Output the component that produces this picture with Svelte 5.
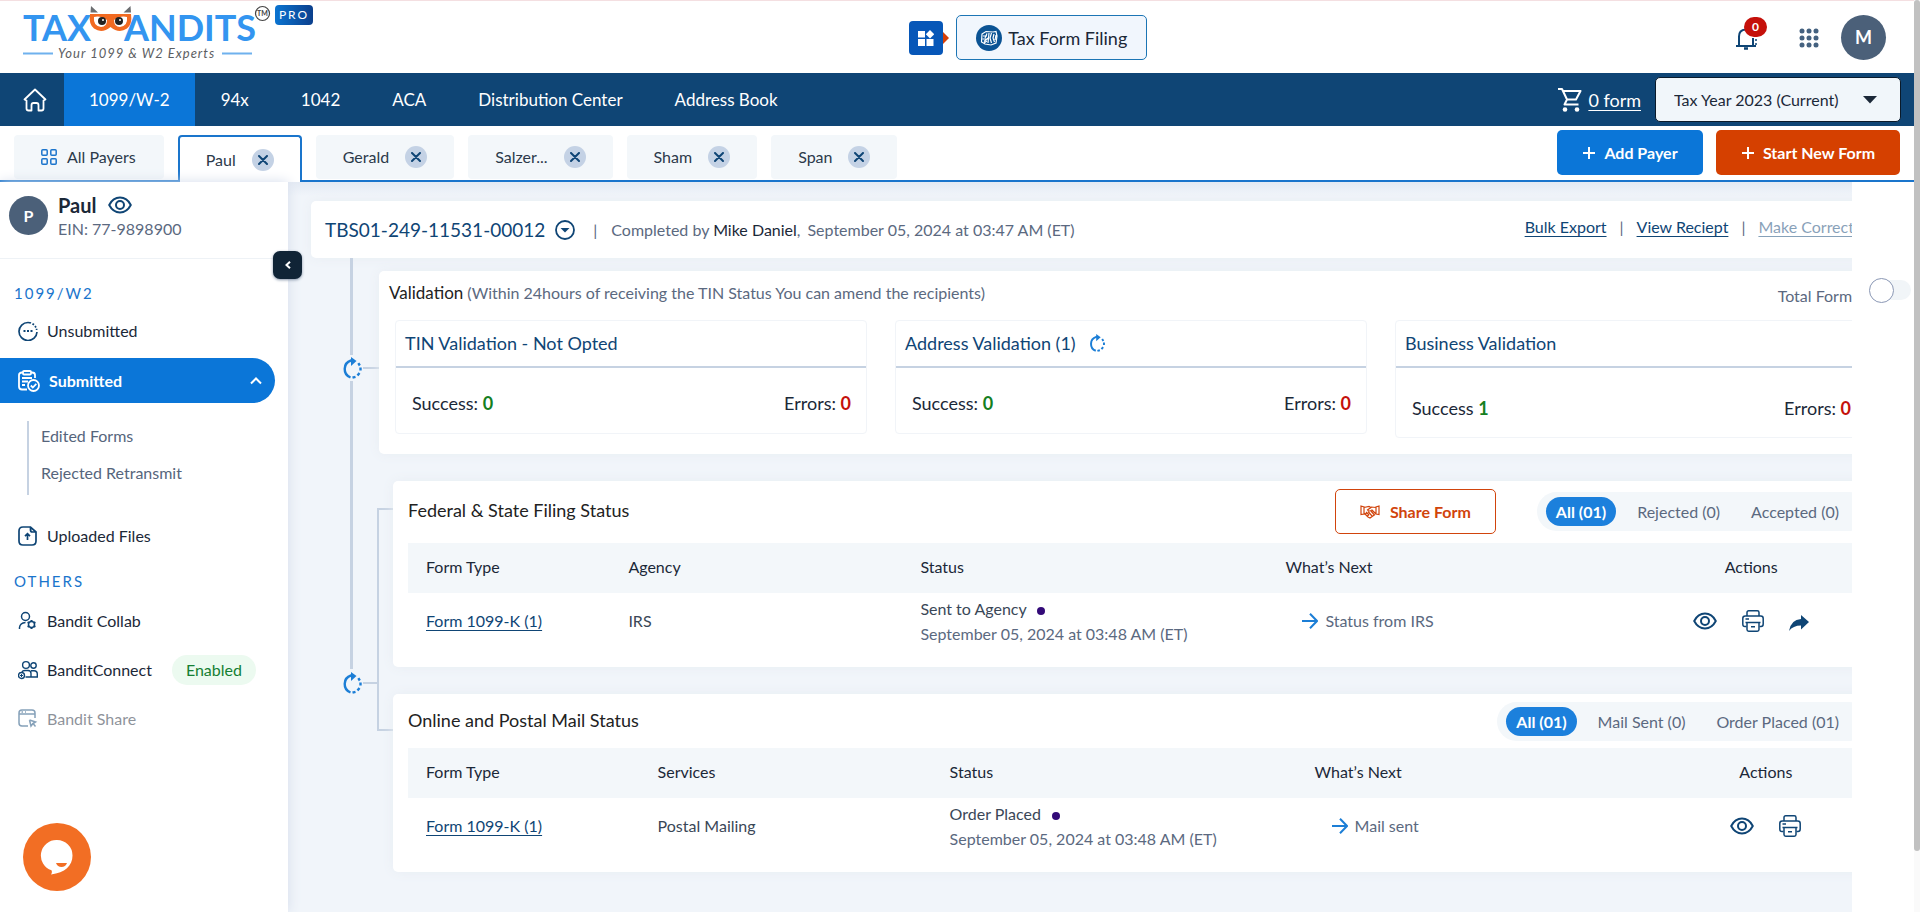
<script lang="ts">
    type Payer = { name: string; active?: boolean };
    type Check = { title: string; label: string; success: number; errors: number; pending?: boolean; tall?: boolean };

    const menu: string[] = ['1099/W-2', '94x', '1042', 'ACA', 'Distribution Center', 'Address Book'];

    let payers: Payer[] = $state([
        { name: 'Paul', active: true },
        { name: 'Gerald' },
        { name: 'Salzer...' },
        { name: 'Sham' },
        { name: 'Span' }
    ]);

    const checks: Check[] = [
        { title: 'TIN Validation - Not Opted', label: 'Success:', success: 0, errors: 0 },
        { title: 'Address Validation (1)', label: 'Success:', success: 0, errors: 0, pending: true },
        { title: 'Business Validation', label: 'Success', success: 1, errors: 0, tall: true }
    ];

    const federalFilters: string[] = ['All (01)', 'Rejected (0)', 'Accepted (0)'];
    const mailFilters: string[] = ['All (01)', 'Mail Sent (0)', 'Order Placed (01)'];

    let submittedOpen = $state(true);

    function closePayer(name: string) {
        payers = payers.filter((payer) => payer.name !== name);
    }
</script>

{#snippet eye()}
    <svg width="24" height="18" viewBox="0 0 24 18" fill="none" stroke="currentColor" stroke-width="2">
        <path d="M1.2 9C3.6 4.4 7.5 1.6 12 1.6S20.400 4.400 22.800 9C20.400 13.600 16.500 16.400 12 16.400S3.600 13.600 1.200 9Z" stroke-linejoin="round" />
        <circle cx="12" cy="9" r="4" />
    </svg>
{/snippet}

{#snippet printer()}
    <svg width="22" height="22" viewBox="0 0 22 22" fill="none" stroke="currentColor" stroke-width="1.500" stroke-linejoin="round">
        <path d="M5 6V2.500Q5 .8 6.700 .8H15.300Q17 .8 17 2.500V6" />
        <path d="M4.500 16.500H3Q.8 16.500 .8 14V8.500Q.8 6 3.200 6H18.800Q21.200 6 21.200 8.500V14Q21.200 16.500 19 16.500H17.500" />
        <path d="M3.500 12.500H18.500M5 12.500V19.500Q5 21.200 6.700 21.200H15.300Q17 21.200 17 19.500V12.500M9 16.800H13M3.500 9H7" />
    </svg>
{/snippet}

{#snippet progress(size: number)}
    <svg width={size} height={size} viewBox="0 0 22 22" fill="none" stroke="#1c7ed6" stroke-width="2.400">
        <path d="M9.500 20.500A9 9 0 0 1 10 3.500H12" />
        <path d="M10 0L15.500 4L10 9Z" fill="#1c7ed6" stroke="none" />
        <path d="M11.500 20.600L14.500 19.800M16.500 18.400L18.500 16M19.500 13.500V10.500M18.800 8.500L17.300 6.200" />
    </svg>
{/snippet}

{#snippet arrow()}
    <svg width="16" height="16" viewBox="0 0 16 16" fill="none" stroke="#1c7ed6" stroke-width="2">
        <path d="M0 8H15M8 .8L15 8L8 15.200" />
    </svg>
{/snippet}

{#snippet plus()}
    <svg width="14" height="14" viewBox="0 0 14 14" stroke="currentColor" stroke-width="2"><path d="M7 1V13M1 7H13" /></svg>
{/snippet}

{#snippet filters(items: string[])}
    <div class="filters">
        {#each items as item, i}
            <button type="button" class:selected={i === 0}>{item}</button>
        {/each}
    </div>
{/snippet}

<div class="window">
    <div class="page">
        <header class="topbar">
            <a class="logo" href="/" aria-label="TaxBandits home">
                <svg width="275" height="60" viewBox="0 0 275 60">
                    <g class="logo-word">
                        <text x="23" y="41">TAX</text>
                        <text x="124" y="41">ANDITS</text>
                    </g>
                    <path d="M91 6L98 12.500H90.500ZM130.500 6L123.500 12.500H131Z" fill="#6b6d70" />
                    <path d="M90 14H131Q132.500 24 127 28.500Q119 34 110.500 27Q102 34 94 28.500Q88.500 24 90 14Z" fill="#f26a21" />
                    <path d="M94 17Q100 15 107 20Q107 27 101 27Q93 26 94 17ZM127 17Q121 15 114 20Q114 27 120 27Q128 26 127 17Z" fill="#fff" />
                    <circle cx="102" cy="21" r="4" fill="#222" />
                    <circle cx="119" cy="21" r="4" fill="#222" />
                    <circle cx="103" cy="20" r="1" fill="#fff" />
                    <circle cx="120" cy="20" r="1" fill="#fff" />
                    <circle cx="262.500" cy="13.500" r="7" fill="none" stroke="#444" stroke-width="1.200" />
                    <text class="logo-tm" x="262.500" y="16">TM</text>
                    <path d="M23 53.500H53M222 53.500H252" stroke="#6fb1ee" stroke-width="2" />
                    <text class="logo-tag" x="58" y="58">Your 1099 &amp; W2 Experts</text>
                </svg>
                <span class="pro">PRO</span>
            </a>

            <div class="product">
                <button type="button" class="launcher" aria-label="Products">
                    <svg width="16" height="16" viewBox="0 0 16 16" fill="#fff">
                        <path d="M0 1H7V7.500H0ZM0 9H7V16H0ZM8.500 9H15.500V16H8.500ZM12 0L16.200 4.200L12 8.400L7.800 4.200Z" />
                    </svg>
                </button>
                <span class="pointer"></span>
                <a class="product-name" href="/filing">
                    <svg width="26" height="26" viewBox="0 0 26 26" fill="none" stroke="#fff" stroke-width="1.200">
                        <circle cx="13" cy="13" r="13" fill="#0b5394" stroke="none" />
                        <path d="M6 9L10 6.500L17 7L20 6.500L21 11L20 18L15 20L9 19L5.500 17ZM7 11H11M6.500 14H10M8 16.500L12 13M11 8.500L9 13M13 8L12 18M15.500 8L14 13L15.500 18M18 9L17 13L18.500 17M20 10L19 15M8 18L11 16" />
                    </svg>
                    Tax Form Filing
                </a>
            </div>

            <div class="account">
                <button type="button" class="bell" aria-label="Notifications">
                    <svg width="24" height="24" viewBox="0 0 24 24" fill="none" stroke="#0f4575" stroke-width="2">
                        <path d="M1 20H21M4 20V10.500Q4 4 10.500 3.500M18 12V20" />
                        <path d="M9 22.500H13" stroke-width="2.500" />
                        <path d="M21 13V15M21 17V19" stroke-width="1.500" />
                    </svg>
                    <span class="badge">0</span>
                </button>
                <button type="button" class="apps" aria-label="Apps">
                    <svg width="20" height="20" viewBox="0 0 20 20" fill="#44617f">
                        {#each [3, 10, 17] as cy}
                            {#each [3, 10, 17] as cx}
                                <circle {cx} {cy} r="2.500" />
                            {/each}
                        {/each}
                    </svg>
                </button>
                <span class="avatar large">M</span>
            </div>
        </header>

        <nav class="menu">
            <a class="home" href="/" aria-label="Home">
                <svg width="24" height="24" viewBox="0 0 24 24" fill="none" stroke="#fff" stroke-width="1.800" stroke-linejoin="round" stroke-linecap="round">
                    <path d="M1.500 11.500L12 1.500L22.500 11.500L20.500 12.500V20.500Q20.500 22.500 18.500 22.500H15.500V17Q15.500 15 13.500 15H10.500Q8.500 15 8.500 17V22.500H5.500Q3.500 22.500 3.500 20.500V12.500Z" />
                </svg>
            </a>
            {#each menu as item, i}
                <a class="menu-item" class:current={i === 0} href="/">{item}</a>
            {/each}
            <a class="cart" href="/cart">
                <svg width="24" height="25" viewBox="0 0 24 25" fill="none" stroke="#fff" stroke-width="2">
                    <path d="M0 2H4L9 12.500H18L22.500 4H5M9 12.500L6.500 17.500H20.500" stroke-linejoin="round" />
                    <circle cx="7" cy="22.500" r="2.300" fill="#fff" stroke="none" />
                    <circle cx="19" cy="22.500" r="2.300" fill="#fff" stroke="none" />
                </svg>
                <span>0 form</span>
            </a>
            <div class="year">
                <select aria-label="Tax year">
                    <option>Tax Year 2023 (Current)</option>
                    <option>Tax Year 2022</option>
                </select>
                <svg width="14" height="8" viewBox="0 0 14 8" fill="#1b2838"><path d="M0 0H14L7 7.500Z" /></svg>
            </div>
        </nav>

        <div class="payers">
            <a class="payer all" href="/payers">
                <svg width="16" height="16" viewBox="0 0 16 16" fill="none" stroke="#1c75cc" stroke-width="1.500">
                    <rect x=".8" y=".8" width="5.400" height="5.400" rx="1" />
                    <rect x="9.800" y=".8" width="5.400" height="5.400" rx="1" />
                    <rect x=".8" y="9.800" width="5.400" height="5.400" rx="1" />
                    <rect x="9.800" y="9.800" width="5.400" height="5.400" rx="1" />
                </svg>
                All Payers
            </a>
            {#each payers as payer (payer.name)}
                <div class="payer" class:open={payer.active}>
                    <a href="/payers">{payer.name}</a>
                    <button type="button" class="close" aria-label={`Close ${payer.name}`} onclick={() => closePayer(payer.name)}>
                        <svg width="10" height="10" viewBox="0 0 10 10" stroke="#0f4575" stroke-width="2" stroke-linecap="round">
                            <path d="M1 1L9 9M9 1L1 9" />
                        </svg>
                    </button>
                </div>
            {/each}
            <div class="payer-actions">
                <button type="button" class="action blue">{@render plus()} Add Payer</button>
                <button type="button" class="action orange">{@render plus()} Start New Form</button>
            </div>
        </div>

        <div class="body">
            <aside class="sidebar">
                <div class="profile">
                    <span class="avatar">P</span>
                    <div>
                        <div class="profile-name">Paul <a href="/payer" aria-label="View payer">{@render eye()}</a></div>
                        <div class="ein">EIN: 77-9898900</div>
                    </div>
                    <button type="button" class="collapse" aria-label="Collapse menu">
                        <svg width="6" height="8" viewBox="0 0 6 8" fill="none" stroke="#fff" stroke-width="2"><path d="M5 .8L1.500 4L5 7.200" /></svg>
                    </button>
                </div>

                <h2>1099/W2</h2>
                <a class="side-item" href="/unsubmitted">
                    <svg width="20" height="20" viewBox="0 0 20 20" fill="none" stroke="#0f4575" stroke-width="1.700">
                        <path d="M19 11A9 9 0 1 1 10 1.500Q12 1.500 13 2" />
                        <path d="M14.500 2.700L16 3.800M17 5L18 6.500M18.600 7.800V9" />
                        <path d="M5.500 10H7.500M9 10H11M12.500 10H14.500" stroke-width="2" />
                    </svg>
                    Unsubmitted
                </a>
                <button type="button" class="side-item chosen" aria-expanded={submittedOpen} onclick={() => (submittedOpen = !submittedOpen)}>
                    <svg width="22" height="22" viewBox="0 0 22 22" fill="none" stroke="#fff" stroke-width="1.800">
                        <path d="M9 19.500H4Q1 19.500 1 16.500V5Q1 2.500 4 2.500H5M13 2.500H14Q17 2.500 17 5V8" />
                        <rect x="5" y="1" width="8" height="3.500" rx="1" />
                        <path d="M4 8H14M4 11.500H10M4 15H7" />
                        <circle cx="15.500" cy="15.500" r="5.500" />
                        <path d="M12.800 15.500L14.800 17.500L18.300 13.800" />
                    </svg>
                    Submitted
                    <svg class="chevron" width="12" height="8" viewBox="0 0 12 8" fill="none" stroke="#fff" stroke-width="2"><path d="M1 6.500L6 1.500L11 6.500" /></svg>
                </button>
                {#if submittedOpen}
                    <div class="submenu">
                        <a href="/edited">Edited Forms</a>
                        <a href="/rejected">Rejected Retransmit</a>
                    </div>
                {/if}
                <a class="side-item" href="/uploads">
                    <svg width="20" height="20" viewBox="0 0 20 20" fill="none" stroke="#0f4575" stroke-width="1.700">
                        <path d="M12.500 1H5Q1 1 1 5V15Q1 19 5 19H14Q18 19 18 15V6ZM12.500 1V4Q12.500 6 14.500 6H18M9.500 14V8M7 10.200L9.500 7.700L12 10.200" />
                    </svg>
                    Uploaded Files
                </a>

                <h2>OTHERS</h2>
                <a class="side-item" href="/collab">
                    <svg width="20" height="20" viewBox="0 0 20 20" fill="none" stroke="#0f4575" stroke-width="1.500">
                        <circle cx="7.500" cy="5.500" r="4" />
                        <path d="M1.500 18V16.500Q2 12 7.500 11.500" />
                        <circle cx="13.500" cy="13.500" r="3" />
                        <path d="M13.500 9V10.500M13.500 16.500V18M9.600 11.200L11 12M16 15L17.400 15.800M17.400 11.200L16 12M11 15L9.600 15.800" stroke-width="2" />
                    </svg>
                    Bandit Collab
                </a>
                <a class="side-item" href="/connect">
                    <svg width="20" height="20" viewBox="0 0 20 20" fill="none" stroke="#0f4575" stroke-width="1.400">
                        <circle cx="8" cy="5" r="3.400" />
                        <circle cx="15.500" cy="5.500" r="2.700" />
                        <path d="M4 12Q4.500 10.500 7 10.500H10Q13 10.500 13 13.500V17H7.500M13 10.800H16Q19.300 10.800 19.300 14V17H13" />
                        <circle cx="3.500" cy="15.500" r="3" />
                        <path d="M3.500 14V17M2 15.500H5" stroke-width="1" />
                    </svg>
                    BanditConnect
                    <span class="enabled">Enabled</span>
                </a>
                <a class="side-item faded" href="/share">
                    <svg width="20" height="20" viewBox="0 0 20 20" fill="none" stroke="#0f4575" stroke-width="1.500">
                        <path d="M10 17H4Q1 17 1 14V4Q1 1 4 1H14Q17 1 17 4V9M1 5H17M3.500 3H5M7 3H8M11.500 11L17.500 13L15 14.500L17.500 17.500M11.500 11L13 17L15 14.500" />
                    </svg>
                    Bandit Share
                </a>

                <button type="button" class="chat" aria-label="Chat">
                    <svg width="34" height="36" viewBox="0 0 34 36">
                        <path d="M17 1A15.500 15.500 0 0 1 32.500 16.500C32.500 27 25 33.500 11 35.500Q12.500 33.500 11.500 31.200A15.500 15.500 0 0 1 17 1Z" fill="#fff" />
                        <path d="M16 24H27Q25.500 28 21.500 28T16 24Z" fill="#f26e24" />
                    </svg>
                </button>
            </aside>

            <main>
                <div class="canvas">
                    <section class="card submission">
                        <h1>TBS01-249-11531-00012</h1>
                        <button type="button" class="toggle-details" aria-label="Submission details">
                            <svg width="20" height="20" viewBox="0 0 20 20" fill="none" stroke="#0f4575" stroke-width="1.800">
                                <circle cx="10" cy="10" r="9" />
                                <path d="M5.500 8H14.500L10 12.500Z" fill="#0f4575" stroke="none" />
                            </svg>
                        </button>
                        <span class="bar">|</span>
                        <span>Completed by <b>Mike Daniel</b>,</span>
                        <time datetime="2024-09-05T03:47">September 05, 2024 at 03:47 AM (ET)</time>
                        <div class="links">
                            <a href="/export">Bulk Export</a>
                            <span class="bar">|</span>
                            <a href="/receipt">View Reciept</a>
                            <span class="bar">|</span>
                            <a class="disabled" href="/correct">Make Corrections</a>
                        </div>
                    </section>

                    <div class="stage">
                        <div class="rail">
                            <span class="line"></span>
                            <span class="node">{@render progress(22)}</span>
                            <span class="joint"></span>
                            <span class="line"></span>
                        </div>
                        <section class="card validation">
                            <header>
                                <p><strong>Validation</strong> (Within 24hours of receiving the TIN Status You can amend the recipients)</p>
                                <span>Total Forms</span>
                            </header>
                            <div class="checks">
                                {#each checks as check}
                                    <article class="check" class:tall={check.tall}>
                                        <h3>
                                            {check.title}
                                            {#if check.pending}{@render progress(18)}{/if}
                                        </h3>
                                        <div class="counts">
                                            <span>{check.label} <b class="good">{check.success}</b></span>
                                            <span>Errors: <b class="bad">{check.errors}</b></span>
                                        </div>
                                    </article>
                                {/each}
                            </div>
                        </section>
                    </div>

                    <div class="stage statuses">
                        <div class="rail">
                            <span class="line"></span>
                            <span class="node">{@render progress(22)}</span>
                            <span class="joint"></span>
                        </div>
                        <div class="bracket"></div>
                        <div class="status-list">
                            <section class="card status">
                                <header class="tall-head">
                                    <h3>Federal &amp; State Filing Status</h3>
                                    <button type="button" class="share">
                                        <svg width="20" height="14" viewBox="0 0 20 14" fill="none" stroke="#d1440c" stroke-width="1.200">
                                            <path d="M1 1L4 2V9L1 9.500ZM19 1L16 2V9L19 9.500ZM4 2.500L9 1.500L11 2.500L7.500 5Q9 7 12 5L16 9M11 2L16 2.500M4 8L8 12L10 13L15 9.500M6 7L9 10M8 6.500L12 11M11 6L14 9.500M5.500 9L7 7.500M7.500 11L9 9.500" />
                                        </svg>
                                        Share Form
                                    </button>
                                    {@render filters(federalFilters)}
                                </header>
                                <table>
                                    <colgroup>
                                        <col class="w14" /><col class="w20" /><col class="w25" /><col class="w25" /><col />
                                    </colgroup>
                                    <thead>
                                        <tr><th>Form Type</th><th>Agency</th><th>Status</th><th>What’s Next</th><th class="actions">Actions</th></tr>
                                    </thead>
                                    <tbody>
                                        <tr>
                                            <td><a href="/form">Form 1099-K (1)</a></td>
                                            <td>IRS</td>
                                            <td>Sent to Agency <i class="dot"></i><br /><time datetime="2024-09-05T03:48">September 05, 2024 at 03:48 AM (ET)</time></td>
                                            <td><span class="next">{@render arrow()} Status from IRS</span></td>
                                            <td>
                                                <div class="tools">
                                                    <button type="button" aria-label="View">{@render eye()}</button>
                                                    <button type="button" aria-label="Print">{@render printer()}</button>
                                                    <button type="button" aria-label="Share">
                                                        <svg width="20" height="22" viewBox="0 0 20 22" fill="currentColor"><path d="M12 5L20 12L12 19.500V15.500Q4 15.500 0 21Q2 9.500 12 9Z" /></svg>
                                                    </button>
                                                </div>
                                            </td>
                                        </tr>
                                    </tbody>
                                </table>
                            </section>

                            <section class="card status">
                                <header>
                                    <h3>Online and Postal Mail Status</h3>
                                    {@render filters(mailFilters)}
                                </header>
                                <table>
                                    <colgroup>
                                        <col class="w16" /><col class="w20" /><col class="w25" /><col class="w25" /><col />
                                    </colgroup>
                                    <thead>
                                        <tr><th>Form Type</th><th>Services</th><th>Status</th><th>What’s Next</th><th class="actions">Actions</th></tr>
                                    </thead>
                                    <tbody>
                                        <tr>
                                            <td><a href="/form">Form 1099-K (1)</a></td>
                                            <td>Postal Mailing</td>
                                            <td>Order Placed <i class="dot"></i><br /><time datetime="2024-09-05T03:48">September 05, 2024 at 03:48 AM (ET)</time></td>
                                            <td><span class="next">{@render arrow()} Mail sent</span></td>
                                            <td>
                                                <div class="tools">
                                                    <button type="button" aria-label="View">{@render eye()}</button>
                                                    <button type="button" aria-label="Print">{@render printer()}</button>
                                                </div>
                                            </td>
                                        </tr>
                                    </tbody>
                                </table>
                            </section>
                        </div>
                    </div>
                </div>
            </main>

            <aside class="panel">
                <input type="checkbox" class="switch" aria-label="Show panel" />
            </aside>
        </div>
    </div>
    <div class="scrollbar"><div class="thumb"></div></div>
</div>

<style>
    :global(body) {
        background: #fff;
        color: #1b2838;
        font-family: Lato, 'Open Sans', sans-serif;
        font-size: 16px;
        line-height: 24px;
    }

    :global(*) {
        box-sizing: border-box;
    }

    a {
        color: inherit;
        text-decoration: none;
    }

    button,
    select {
        padding: 0;
        border: 0;
        background: none;
        color: inherit;
        font: inherit;
        cursor: pointer;
    }

    svg {
        display: block;
        flex: none;
    }

    h1,
    h2,
    h3,
    p {
        margin: 0;
        font-weight: 400;
    }

    .window {
        display: flex;
        min-height: 100vh;
    }

    .page {
        display: flex;
        flex-direction: column;
        flex: 1;
        min-width: 0;
        border-top: 1px solid #f4dfe1;
    }

    .scrollbar {
        width: 6px;
        background: #fafafa;
    }

    .thumb {
        height: 851px;
        max-height: 94%;
        border-radius: 3px;
        background: #c1c1c1;
    }

    /* top bar */
    .topbar {
        display: grid;
        grid-template-columns: 16fr auto 13fr;
        height: 72px;
        padding-right: 28px;
    }

    .logo {
        display: flex;
        align-items: flex-start;
        margin-top: -1px;
    }

    .logo-word {
        fill: #3395f0;
        font-size: 36px;
        font-weight: 700;
    }

    .logo-tm {
        fill: #444;
        font-size: 7px;
        font-weight: 700;
        text-anchor: middle;
    }

    .logo-tag {
        fill: #5c5e62;
        font-size: 13px;
        font-style: italic;
        letter-spacing: 1px;
    }

    .pro {
        width: 38px;
        margin-top: 5px;
        border-radius: 4px;
        background: linear-gradient(90deg, #0b74d1, #0b3f8c);
        color: #fff;
        font-size: 12px;
        line-height: 20px;
        letter-spacing: 2px;
        text-align: center;
    }

    .product {
        display: flex;
        align-items: center;
        margin-bottom: 13px;
        padding-top: 14px;
    }

    .product-name {
        display: flex;
        align-items: center;
        gap: 6px;
        height: 45px;
        margin-left: 7px;
        padding: 0 19px;
        border: 1px solid #1c75b5;
        border-radius: 5px;
        background: #f1f6fd;
        font-size: 18px;
    }

    .launcher {
        display: grid;
        place-items: center;
        width: 34px;
        height: 34px;
        border-radius: 4px;
        background: #0757b8;
    }

    .pointer {
        border: 6px solid transparent;
        border-right: 0;
        border-left-color: #d63f06;
    }

    .account {
        display: flex;
        align-items: center;
        justify-content: flex-end;
        padding-top: 14px;
        margin-bottom: 13px;
    }

    .bell {
        position: relative;
        margin-right: 40px;
    }

    .badge {
        position: absolute;
        top: -9px;
        left: 9px;
        width: 23px;
        border-radius: 10px;
        background: #c5110b;
        color: #fff;
        font-size: 12px;
        font-weight: 700;
        line-height: 20px;
    }

    .apps {
        margin-right: 22px;
    }

    .avatar {
        flex: none;
        align-self: flex-start;
        width: 39px;
        border-radius: 50%;
        background: #4b6079;
        color: #fff;
        font-weight: 700;
        line-height: 39px;
        text-align: center;
    }

    .avatar.large {
        width: 45px;
        font-size: 18px;
        line-height: 45px;
    }

    /* main menu */
    .menu {
        display: flex;
        align-items: center;
        height: 53px;
        padding-right: 13px;
        background: #0f4575;
        color: #fff;
        font-size: 17px;
    }

    .home {
        display: grid;
        place-items: center;
        width: 64px;
        padding-left: 6px;
    }

    .menu-item {
        padding: 0 26px;
        line-height: 53px;
    }

    .menu-item.current {
        padding: 0 25px;
        background: #0b76d8;
    }

    .cart {
        display: flex;
        align-items: center;
        gap: 6px;
        margin-left: auto;
        margin-right: 14px;
        font-size: 18px;
    }

    .cart span {
        text-decoration: underline;
        text-underline-offset: 3px;
    }

    .year {
        display: grid;
        align-items: center;
        width: 246px;
    }

    .year > * {
        grid-area: 1 / 1;
    }

    .year select {
        width: 100%;
        height: 45px;
        padding: 0 18px;
        border: 1px solid #0a1a2a;
        border-radius: 5px;
        background: #f1f6fa;
        color: #1b2838;
        font-size: 16px;
        appearance: none;
    }

    .year svg {
        justify-self: end;
        margin-right: 24px;
        pointer-events: none;
    }

    /* payer tabs */
    .payers {
        display: flex;
        align-items: flex-end;
        gap: 14px;
        height: 56px;
        padding: 0 14px;
        border-bottom: 2px solid #1a75cc;
    }

    .payer {
        display: flex;
        align-items: center;
        gap: 16px;
        height: 44px;
        margin-bottom: 1px;
        padding: 0 27px;
        border-radius: 4px;
        background: #f3f7fa;
        color: #2c3a4a;
    }

    .payer.all {
        gap: 10px;
        padding-right: 28px;
    }

    .payer.open {
        height: 47px;
        margin-bottom: -2px;
        padding: 0 26px;
        border: 2px solid #1a75cc;
        border-bottom: 0;
        border-radius: 4px 4px 0 0;
        background: #fff;
    }

    .close {
        display: grid;
        place-items: center;
        width: 22px;
        height: 22px;
        border-radius: 50%;
        background: #c4d2e5;
    }

    .payer-actions {
        display: flex;
        gap: 13px;
        margin-left: auto;
        margin-bottom: 5px;
    }

    .action {
        display: flex;
        align-items: center;
        justify-content: center;
        gap: 8px;
        height: 45px;
        border-radius: 5px;
        color: #fff;
        font-weight: 700;
    }

    .blue {
        width: 146px;
        background: #0b76d8;
    }

    .orange {
        width: 184px;
        background: #d54000;
    }

    /* sidebar */
    .body {
        display: flex;
        flex: 1;
    }

    .sidebar {
        display: flex;
        flex-direction: column;
        width: 288px;
        flex: none;
        box-shadow: 0 0 12px #d4dceb;
        z-index: 1;
    }

    .profile {
        display: flex;
        position: relative;
        gap: 10px;
        height: 77px;
        padding: 14px 9px 0;
        border-bottom: 1px solid #eef2f6;
    }

    .profile > div {
        margin-top: -3px;
    }

    .profile-name {
        display: flex;
        align-items: center;
        gap: 12px;
        font-size: 20px;
        font-weight: 700;
    }

    .profile-name a {
        color: #0f4575;
    }

    .ein {
        color: #5b6980;
    }

    .collapse {
        display: grid;
        place-items: center;
        position: absolute;
        right: -14px;
        bottom: -21px;
        width: 29px;
        height: 28px;
        border-radius: 7px;
        background: #102436;
        box-shadow: 0 1px 3px #8594a8;
    }

    .sidebar h2 {
        padding-left: 14px;
        color: #1a75cc;
        font-size: 15px;
        line-height: 24px;
        letter-spacing: 2px;
    }

    .profile + h2 {
        margin-top: 22px;
    }

    .side-item {
        display: flex;
        align-items: center;
        gap: 9px;
        height: 45px;
        margin-bottom: 4px;
        padding-left: 18px;
    }

    .profile + h2 + .side-item {
        margin: 3px 0 5px;
    }

    .chosen {
        width: 275px;
        margin-bottom: 18px;
        border-radius: 0 23px 23px 0;
        background: #0b76d8;
        color: #fff;
        font-weight: 700;
    }

    .chevron {
        margin: 0 13px 0 auto;
    }

    .submenu {
        display: flex;
        flex-direction: column;
        gap: 13px;
        height: 74px;
        margin: 0 0 18px 27px;
        padding: 3px 0 0 12px;
        border-left: 2px solid #c6d2e2;
        color: #56657c;
    }

    .submenu + .side-item {
        margin-bottom: 11px;
    }

    .sidebar h2:not(.profile + h2) {
        margin-bottom: 5px;
    }

    .enabled {
        margin-left: 11px;
        padding: 0 14px;
        border-radius: 15px;
        background: #ecfaf0;
        color: #157f33;
        line-height: 30px;
    }

    .faded {
        opacity: 0.5;
    }

    .chat {
        display: grid;
        place-items: center;
        width: 68px;
        height: 68px;
        margin: auto 0 21px 23px;
        border-radius: 50%;
        background: #f26e24;
    }

    /* content */
    main {
        flex: 1;
        min-width: 0;
        padding: 19px 0 0 23px;
        overflow: hidden;
        background: linear-gradient(#e4eaf3, #f1f5fa 14px);
    }

    /* wider than the column, its right edge goes under the panel */
    .canvas {
        margin-right: -31px;
    }

    .card {
        border-radius: 5px;
        background: #fff;
        box-shadow: 0 0 12px #e8edf3;
    }

    .submission {
        display: flex;
        align-items: center;
        height: 57px;
        padding-left: 14px;
        color: #5b6980;
    }

    .submission h1 {
        color: #0f4575;
        font-size: 19px;
    }

    .toggle-details {
        margin: 0 18px 0 10px;
    }

    .submission > .bar {
        margin-right: 14px;
    }

    .submission b {
        color: #1b2838;
        font-weight: 400;
    }

    .submission time {
        margin-left: 7px;
    }

    .links {
        display: flex;
        gap: 13px;
        margin-left: auto;
        padding-bottom: 5px;
    }

    .links a,
    td a {
        color: #0f4575;
        text-decoration: underline;
        text-underline-offset: 3px;
    }

    .links .disabled {
        opacity: 0.5;
    }

    .stage {
        display: grid;
        grid-template-columns: 68px 1fr;
    }

    .rail {
        display: grid;
        grid-template-columns: 30px 22px 1fr;
        grid-template-rows: 97px 26px 1fr;
    }

    .line {
        grid-column: 2;
        width: 3px;
        margin-left: 9px;
        background: #c6d2e2;
    }

    .node {
        grid-column: 2;
        align-self: center;
    }

    .joint {
        align-self: center;
        height: 2px;
        background: #c6d2e2;
    }

    .validation {
        margin-top: 13px;
        padding: 0 16px 21px;
    }

    .validation header {
        display: flex;
        justify-content: space-between;
        align-items: center;
        height: 49px;
        margin-left: -6px;
        padding-right: 8px;
        color: #5b6980;
    }

    .validation header p {
        padding-bottom: 5px;
    }

    .validation strong {
        color: #222;
        font-size: 17px;
        font-weight: 400;
    }

    .checks {
        display: grid;
        grid-template-columns: repeat(3, 1fr);
        gap: 28px;
        align-items: start;
        height: 113px;
    }

    .check {
        border: 1px solid #f1f4f8;
        border-radius: 4px;
        font-size: 18px;
    }

    .check h3 {
        display: flex;
        align-items: center;
        gap: 12px;
        height: 47px;
        padding: 0 0 2px 9px;
        border-bottom: 2px solid #c6d2e2;
        color: #0f4575;
        font-size: 18px;
    }

    .counts {
        display: flex;
        justify-content: space-between;
        padding: 23px 15px 18px 16px;
    }

    .tall .counts {
        padding-top: 28px;
        padding-bottom: 17px;
    }

    .good {
        color: #157f1f;
    }

    .bad {
        color: #c5110b;
    }

    .statuses {
        grid-template-columns: 66px 16px 1fr;
    }

    .statuses .rail {
        grid-template-rows: 215px 28px;
    }

    .bracket {
        height: 223px;
        margin-top: 54px;
        border: 2px solid #c6d2e2;
        border-right: 0;
    }

    .status-list {
        display: grid;
        gap: 27px;
        padding: 27px 0 38px;
    }

    .status {
        padding: 0 15px 15px;
    }

    .status header {
        display: flex;
        align-items: center;
        height: 54px;
    }

    .status header.tall-head {
        height: 62px;
        padding-bottom: 1px;
    }

    .status header h3 {
        margin-right: auto;
        padding-bottom: 3px;
        color: #222;
        font-size: 18px;
    }

    .share {
        display: flex;
        align-items: center;
        justify-content: center;
        gap: 10px;
        width: 161px;
        height: 45px;
        margin-right: 41px;
        border: 1px solid #d1440c;
        border-radius: 5px;
        color: #d1440c;
        font-weight: 700;
    }

    .filters {
        display: flex;
        align-items: center;
        gap: 11px;
        height: 39px;
        padding: 0 19px 0 9px;
        border-radius: 20px;
        background: #f3f7fa;
        color: #5b6980;
    }

    .filters button {
        padding: 0 10px;
        border-radius: 15px;
        line-height: 29px;
    }

    .filters .selected {
        background: #1c80dc;
        color: #fff;
        font-weight: 700;
    }

    table {
        width: 100%;
        border-collapse: collapse;
        table-layout: fixed;
    }

    .w14 {
        width: 14%;
    }

    .w16 {
        width: 16%;
    }

    .w20 {
        width: 20%;
    }

    .w25 {
        width: 25%;
    }

    th {
        height: 50px;
        padding: 0 0 2px 18px;
        background: #f3f7fa;
        font-weight: 400;
        text-align: left;
    }

    th.actions {
        padding: 0 0 2px;
        text-align: center;
    }

    td {
        height: 59px;
        padding: 0 0 4px 18px;
        color: #3a4757;
        line-height: 25px;
    }

    th:nth-child(2),
    td:nth-child(2),
    th:nth-child(3),
    td:nth-child(3),
    th:nth-child(4),
    td:nth-child(4) {
        padding-left: 16px;
    }

    td:last-child {
        padding-left: 0;
    }

    td time {
        color: #5b6980;
    }

    .dot {
        display: inline-block;
        width: 8px;
        height: 8px;
        margin-left: 7px;
        border-radius: 50%;
        background: #330a78;
    }

    .next {
        display: flex;
        align-items: center;
        gap: 7px;
        padding-left: 17px;
        color: #5b6980;
    }

    .tools {
        display: flex;
        align-items: center;
        justify-content: center;
        gap: 25px;
        color: #0f4575;
    }

    .panel {
        z-index: 1;
        width: 62px;
        flex: none;
        background: #fff;
    }

    .switch {
        display: flex;
        align-items: center;
        width: 42px;
        height: 20px;
        margin: 98px 0 0 17px;
        border-radius: 10px;
        background: #f1f5f8;
        appearance: none;
    }

    .switch::before {
        content: '';
        width: 23px;
        height: 23px;
        border: 1px solid #8b98b5;
        border-radius: 50%;
        background: #fff;
    }
</style>
